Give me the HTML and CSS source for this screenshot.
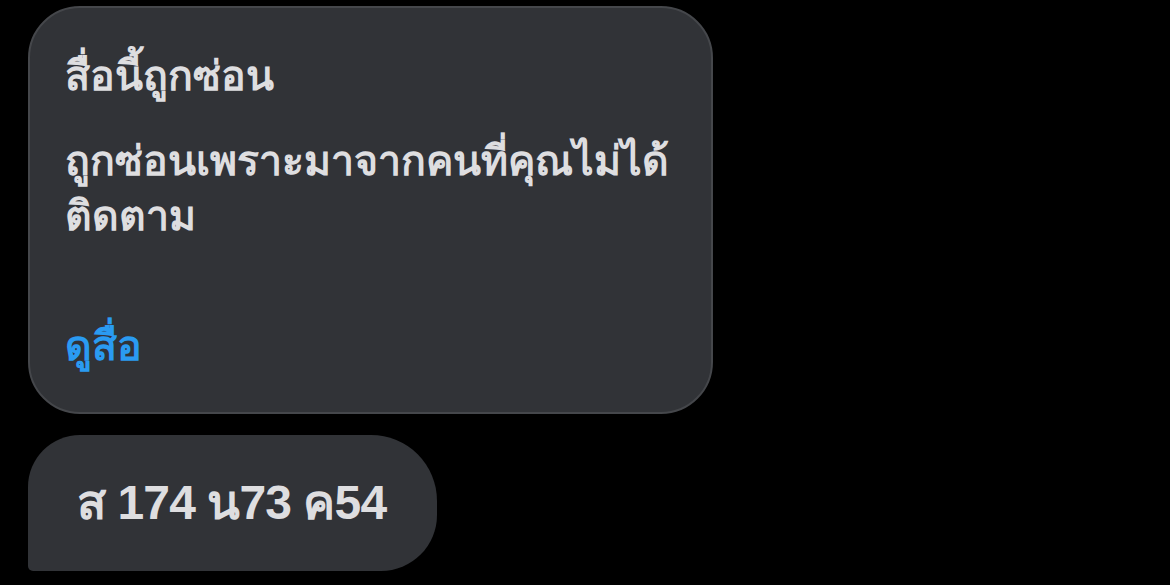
FILE: index.html
```html
<!DOCTYPE html>
<html lang="th">
<head>
<meta charset="utf-8">
<link rel="stylesheet" href="styles.css">
</head>
<body>
<div class="chat">
  <div class="bubble notice">
    <div class="title">สื่อนี้ถูกซ่อน</div>
    <div class="desc">ถูกซ่อนเพราะมาจากคนที่คุณไม่ได้<br>ติดตาม</div>
    <div class="link">ดูสื่อ</div>
  </div>
  <div class="bubble msg">ส 174 น73 ค54</div>
</div>
</body>
</html>
```

FILE: styles.css
```css
html, body {
  margin: 0;
  padding: 0;
  background: #000;
  width: 1170px;
  height: 585px;
  overflow: hidden;
}
body {
  font-family: "Liberation Sans", "Noto Sans", sans-serif;
  font-weight: bold;
  color: #dedee0;
}
.chat {
  display: flex;
  flex-direction: column;
  align-items: flex-start;
  gap: 21px;
  padding: 6px 0 0 28px;
}
.bubble {
  background: #313337;
  box-sizing: border-box;
}
.notice {
  width: 685px;
  height: 408px;
  border: 2px solid #45474b;
  border-radius: 52px;
  padding: 41px 0 0 35px;
  font-size: 41px;
  line-height: 55px;
}
.desc { margin-top: 30px; }
.link { margin-top: 75px; color: #2a9bf1; }
.msg {
  width: 409px;
  height: 136px;
  border-radius: 52px 66px 56px 5px;
  padding: 40px 0 0 49px;
  font-size: 48px;
  line-height: 56px;
  letter-spacing: -0.9px;
}
```
